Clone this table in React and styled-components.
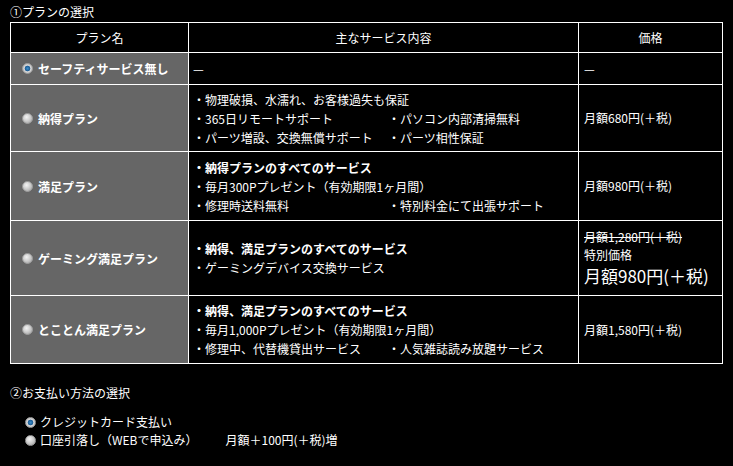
import styled, { createGlobalStyle } from 'styled-components';

const GlobalStyle = createGlobalStyle`
  body {
    margin: 0;
    background: #000;
    color: #fff;
    font-family: 'Noto Sans CJK JP', 'Noto Sans', sans-serif;
    font-size: 12px;
  }
`;

const plans = [
  {
    name: 'セーフティサービス無し',
    checked: true,
    height: 32,
    services: [{ text: '—' }],
    price: [{ text: '—' }],
  },
  {
    name: '納得プラン',
    height: 67,
    services: [
      { text: '・物理破損、水濡れ、お客様過失も保証', wide: true },
      { text: '・365日リモートサポート' },
      { text: '・パソコン内部清掃無料' },
      { text: '・パーツ増設、交換無償サポート' },
      { text: '・パーツ相性保証' },
    ],
    price: [{ text: '月額680円(＋税)' }],
  },
  {
    name: '満足プラン',
    height: 69,
    services: [
      { text: '・納得プランのすべてのサービス', wide: true, bold: true },
      { text: '・毎月300Pプレゼント（有効期限1ヶ月間）', wide: true },
      { text: '・修理時送料無料' },
      { text: '・特別料金にて出張サポート' },
    ],
    price: [{ text: '月額980円(＋税)' }],
  },
  {
    name: 'ゲーミング満足プラン',
    height: 75,
    services: [
      { text: '・納得、満足プランのすべてのサービス', wide: true, bold: true },
      { text: '・ゲーミングデバイス交換サービス', wide: true },
    ],
    price: [
      { text: '月額1,280円(＋税)', strike: true },
      { text: '特別価格' },
      { text: '月額980円(＋税)', big: true },
    ],
  },
  {
    name: 'とことん満足プラン',
    height: 68,
    services: [
      { text: '・納得、満足プランのすべてのサービス', wide: true, bold: true },
      { text: '・毎月1,000Pプレゼント（有効期限1ヶ月間）', wide: true },
      { text: '・修理中、代替機貸出サービス' },
      { text: '・人気雑誌読み放題サービス' },
    ],
    price: [{ text: '月額1,580円(＋税)' }],
  },
];

export default function App() {
  return (
    <>
      <GlobalStyle />
      <Page>
        <SectionTitle>①プランの選択</SectionTitle>
        <PlanTable>
          <colgroup>
            <col style={{ width: 178 }} />
            <col style={{ width: 390 }} />
            <col />
          </colgroup>
          <thead>
            <tr>
              <HeadCell>プラン名</HeadCell>
              <HeadCell>主なサービス内容</HeadCell>
              <HeadCell>価格</HeadCell>
            </tr>
          </thead>
          <tbody>
            {plans.map((plan) => (
              <PlanRow key={plan.name} $height={plan.height}>
                <NameCell>
                  <NameLabel>
                    <Radio $checked={plan.checked} />
                    <span>{plan.name}</span>
                  </NameLabel>
                </NameCell>
                <ServiceCell>
                  <ServiceList>
                    {plan.services.map((s) => (
                      <ServiceItem key={s.text} $wide={s.wide} $bold={s.bold}>
                        {s.text}
                      </ServiceItem>
                    ))}
                  </ServiceList>
                </ServiceCell>
                <PriceCell>
                  {plan.price.map((p) => (
                    <PriceLine key={p.text} $strike={p.strike} $big={p.big}>
                      {p.text}
                    </PriceLine>
                  ))}
                </PriceCell>
              </PlanRow>
            ))}
          </tbody>
        </PlanTable>

        <PaymentTitle>②お支払い方法の選択</PaymentTitle>
        <PaymentList>
          <PaymentOption>
            <Radio $checked />
            <span>クレジットカード支払い</span>
          </PaymentOption>
          <PaymentOption>
            <Radio />
            <span>口座引落し（WEBで申込み）</span>
            <Extra>月額＋100円(＋税)増</Extra>
          </PaymentOption>
        </PaymentList>
      </Page>
    </>
  );
}

const Page = styled.div`
  padding: 3px 11px 0 10px;
`;

const SectionTitle = styled.div`
  font-size: 12px;
  line-height: 18px;
  height: 19px;
`;

const PlanTable = styled.table`
  width: 713px;
  border-collapse: collapse;
  table-layout: fixed;
  font-size: 12px;
  color: #fff;
`;

const HeadCell = styled.th`
  height: 29px;
  border: 1px solid #fff;
  font-weight: 400;
  text-align: center;
  padding: 0;
  background: #000;
`;

const PlanRow = styled.tr`
  height: ${(p) => p.$height}px;
`;

const NameCell = styled.td`
  background: #666;
  border: 1px solid #fff;
  padding: 0 0 0 11px;
  vertical-align: middle;
  font-weight: 700;
`;

const NameLabel = styled.label`
  display: flex;
  align-items: center;
  gap: 5px;
`;

const Radio = styled.span`
  display: inline-block;
  width: 11px;
  height: 11px;
  flex: none;
  border-radius: 50%;
  box-sizing: border-box;
  border: 1px solid #9a9a9a;
  background: ${(p) =>
    p.$checked
      ? 'radial-gradient(circle at 50% 50%, #3a8cc8 0, #1d5d95 2.5px, #d8d8d8 3.2px, #a9a9a9 100%)'
      : 'radial-gradient(circle at 40% 35%, #f4f4f4 0, #cfcfcf 45%, #9c9c9c 100%)'};
`;

const ServiceCell = styled.td`
  border: 1px solid #fff;
  padding: 0 4px;
  vertical-align: middle;
`;

const ServiceList = styled.div`
  display: grid;
  grid-template-columns: 195px 1fr;
  line-height: 19px;
`;

const ServiceItem = styled.div`
  grid-column: ${(p) => (p.$wide ? '1 / -1' : 'auto')};
  font-weight: ${(p) => (p.$bold ? 700 : 400)};
  white-space: nowrap;
`;

const PriceCell = styled.td`
  border: 1px solid #fff;
  padding: 0 5px;
  vertical-align: middle;
`;

const PriceLine = styled.div`
  line-height: ${(p) => (p.$big ? '24px' : '18px')};
  font-size: ${(p) => (p.$big ? '17px' : '12px')};
  text-decoration: ${(p) => (p.$strike ? 'line-through' : 'none')};
`;

const PaymentTitle = styled.div`
  margin-top: 20px;
  line-height: 18px;
`;

const PaymentList = styled.div`
  margin-top: 11px;
  padding-left: 15px;
  display: flex;
  flex-direction: column;
`;

const PaymentOption = styled.label`
  display: flex;
  align-items: center;
  gap: 4px;
  line-height: 18px;
`;

const Extra = styled.span`
  margin-left: 24px;
`;
